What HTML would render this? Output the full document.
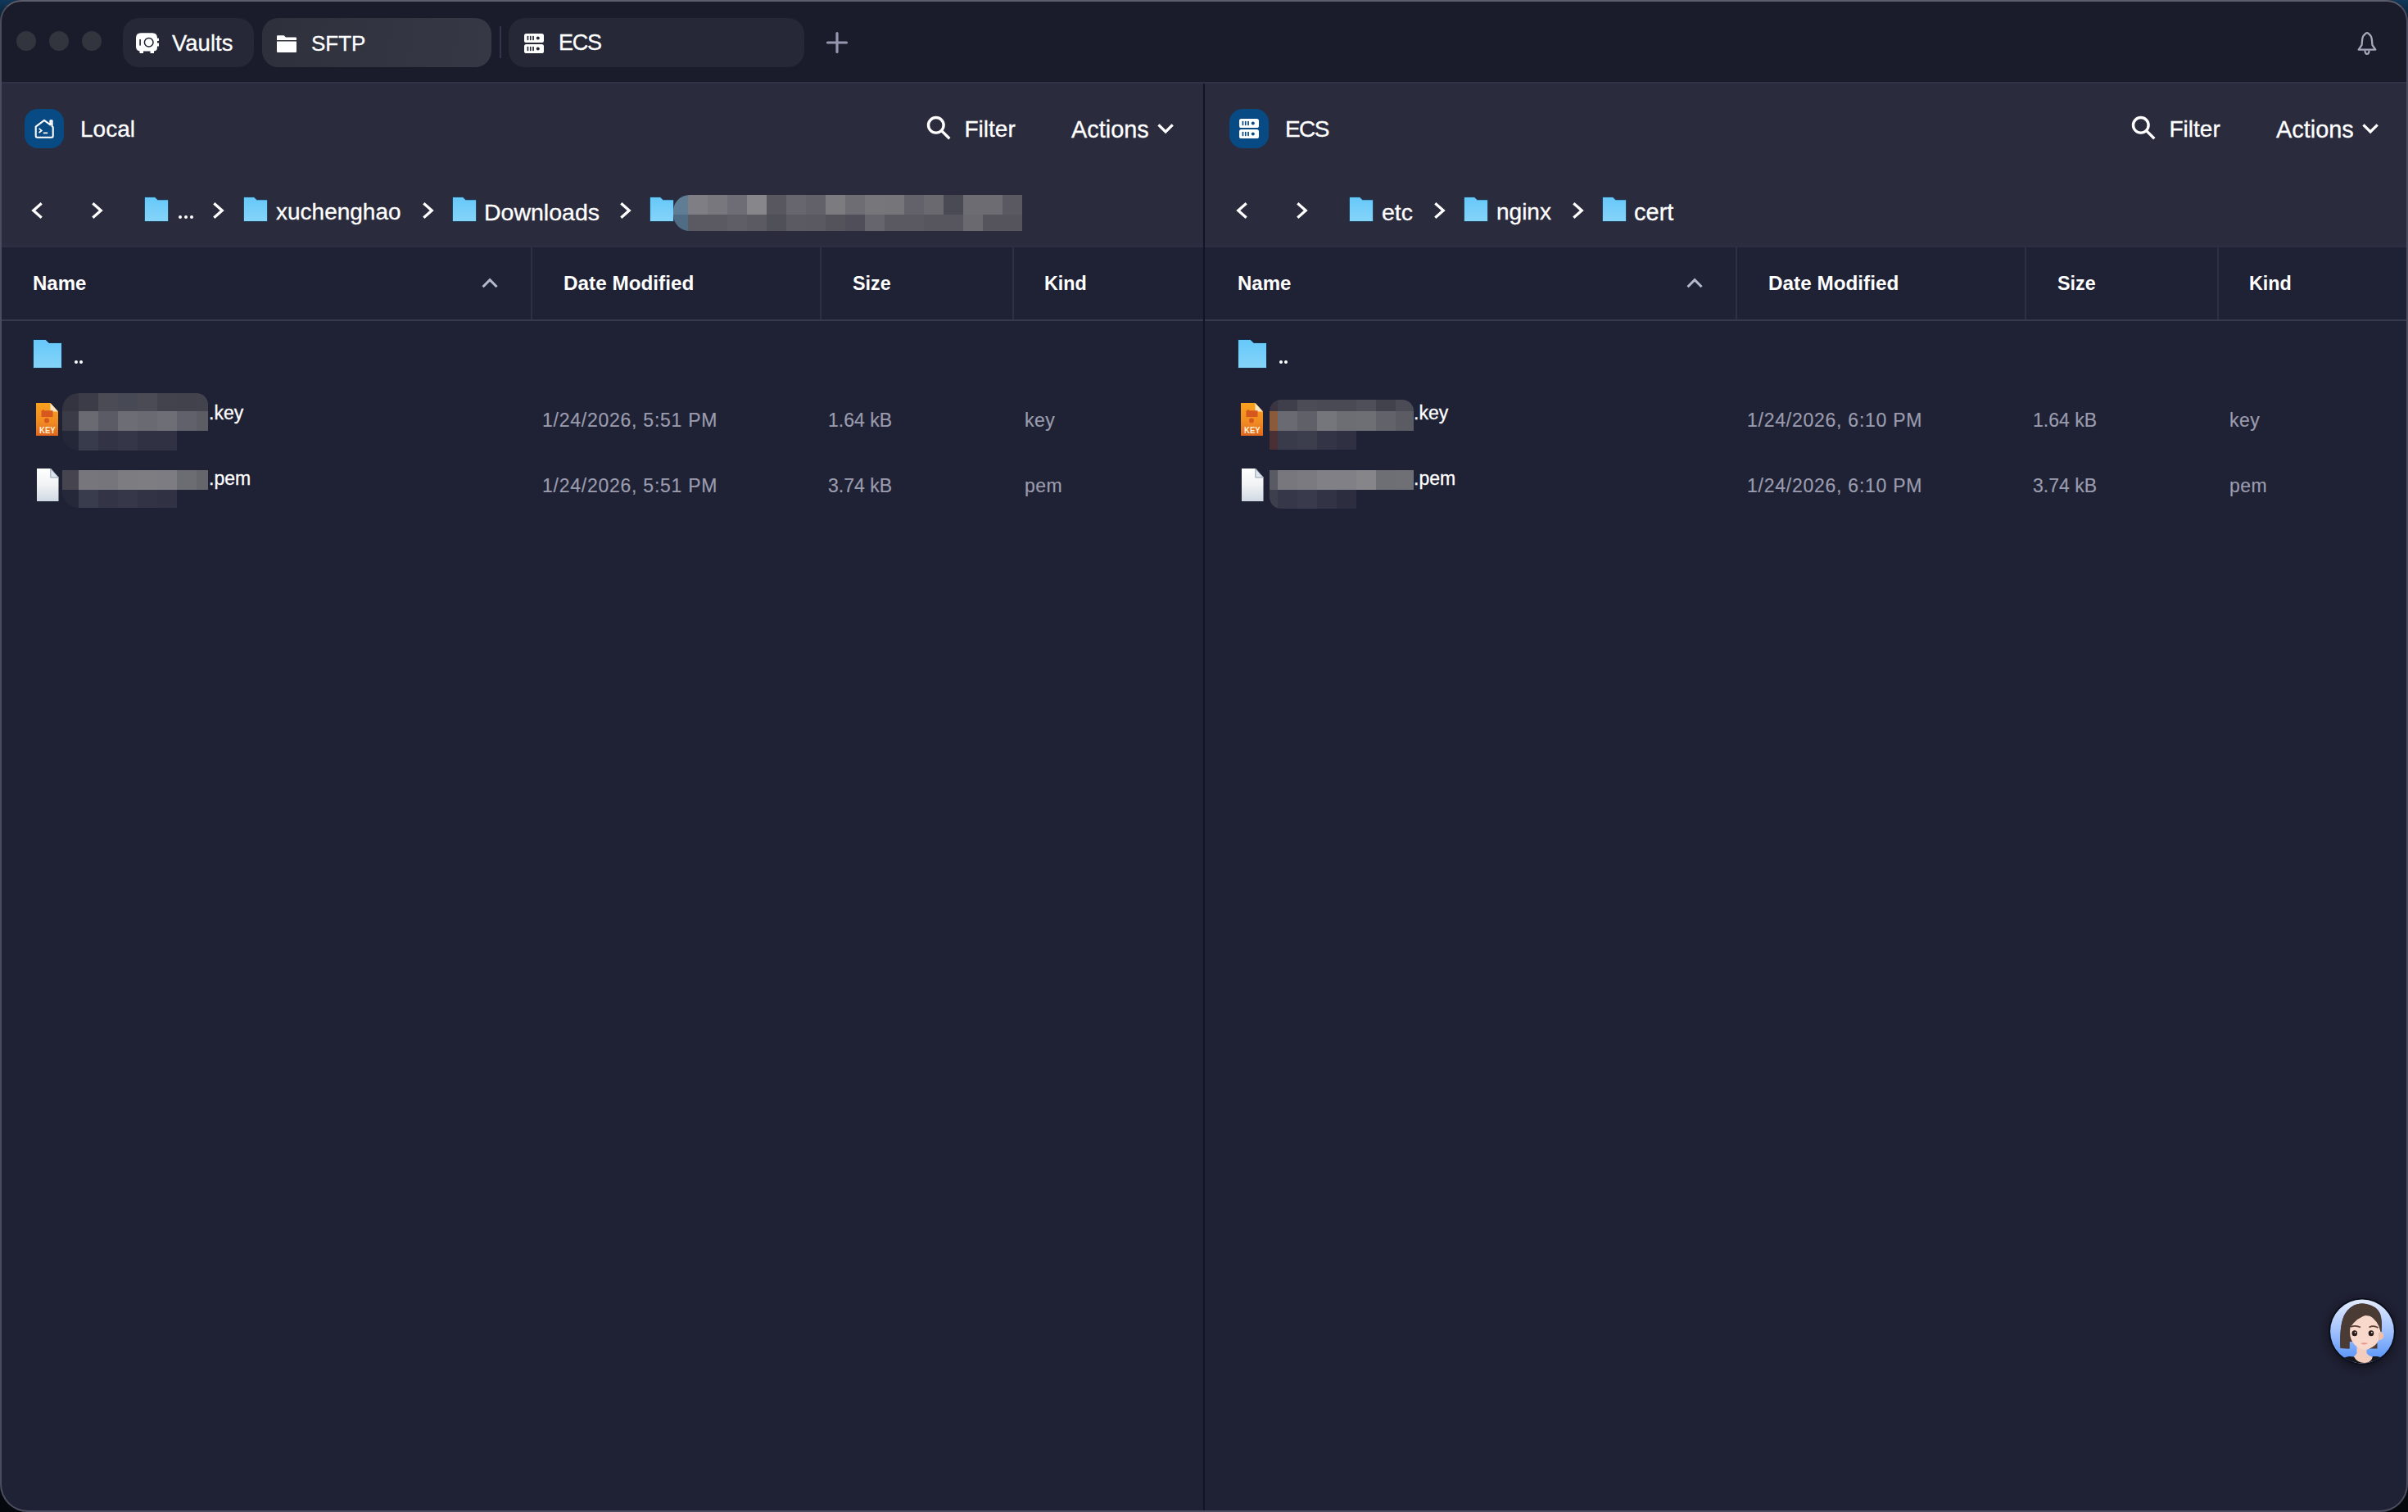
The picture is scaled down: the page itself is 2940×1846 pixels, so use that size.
<!DOCTYPE html>
<html><head><meta charset="utf-8">
<style>
*{margin:0;padding:0;box-sizing:border-box}
html,body{width:2940px;height:1846px;overflow:hidden;background:#040609}
body{background:linear-gradient(#10385a 0px,#0b2236 22px,#05080c 44px) !important}
body{position:relative;font-family:"Liberation Sans",sans-serif}
.win{position:absolute;left:0;top:0;width:2940px;height:1846px;border-radius:26px 26px 34px 34px;background:#1f2134;overflow:hidden}
.bd{position:absolute;left:0;top:0;width:2940px;height:1846px;border-radius:26px 26px 34px 34px;border:2px solid #4b4d5e;border-top-color:#5c5e6c;pointer-events:none;z-index:50}
.a{position:absolute}
.t{position:absolute;white-space:nowrap;line-height:1;color:#fff;-webkit-text-stroke:0.3px #fff}
.dt{-webkit-text-stroke:0.2px #9a9cae !important}
.tl{position:absolute;width:24px;height:24px;border-radius:50%;background:#33353e;top:38px}
.tab{position:absolute;top:22px;height:60px;border-radius:20px;background:#262837}
.cline{position:absolute;height:2px;background:#363a4d}
.csep{position:absolute;width:2px;background:#2d3043}
.ch{font-weight:700;font-size:24px;-webkit-text-stroke:0 !important}
.dt{font-size:23px;color:#9a9cae;letter-spacing:0.75px}
.fn{font-size:23px}
.bc{font-size:28px}
.hd{font-size:28px}
.pnl{position:absolute;top:0;width:1469px;height:1846px}
</style></head><body>
<svg width="0" height="0" style="position:absolute">
<defs>
<linearGradient id="fg" x1="0" y1="0" x2="0" y2="1"><stop offset="0" stop-color="#66c8f9"/><stop offset="1" stop-color="#85d4f9"/></linearGradient>
<linearGradient id="kg" x1="0" y1="0" x2="0" y2="1"><stop offset="0" stop-color="#f9a21e"/><stop offset="0.6" stop-color="#f08a22"/><stop offset="1" stop-color="#e0661f"/></linearGradient>
<linearGradient id="pg" x1="0" y1="0" x2="0" y2="1"><stop offset="0" stop-color="#ffffff"/><stop offset="0.5" stop-color="#f1f2f4"/><stop offset="1" stop-color="#cfd9e3"/></linearGradient>
<linearGradient id="ag" x1="0" y1="0" x2="0" y2="1"><stop offset="0" stop-color="#e3ecff"/><stop offset="0.45" stop-color="#a8c6ff"/><stop offset="1" stop-color="#4f8ff8"/></linearGradient>
</defs></svg>
<div class="win">
<div class="a" style="left:0;top:0;width:2940px;height:100px;background:#1b1c2b"></div>
<div class="tl" style="left:20px"></div><div class="tl" style="left:60px"></div><div class="tl" style="left:100px"></div>
<div class="tab" style="left:150px;width:160px"></div>
<div class="tab" style="left:320px;width:280px;background:linear-gradient(100deg,#2e303c,#373845)"></div>
<div class="a" style="left:610px;top:32px;width:2px;height:39px;background:#33354a"></div>
<div class="tab" style="left:621px;width:361px"></div>
<svg class="a" style="left:165px;top:39px" width="31" height="28" viewBox="0 0 31 28"><path d="M7,1.3 H21 Q27,1.3 27,7.3 V7.8 H29 V11.1 H27 V13.6 H29 V17.6 H27 V18.5 Q27,23.3 23,23.5 V26 H18.5 V23.5 H10 V26 H5.5 V23.4 Q1,22.8 1,18 V7.3 Q1,1.3 7,1.3 Z" fill="#fff"/><rect x="5.3" y="9" width="1.6" height="7.6" fill="#1f2233"/><circle cx="16.7" cy="12.8" r="5.3" fill="none" stroke="#1f2233" stroke-width="1.5"/></svg><svg class="a" style="left:338px;top:43px" width="24" height="22" viewBox="0 0 24 22"><path d="M1,0.3 H8.6 L11,2.6 H23 Q24,2.6 24,3.6 V6 H0 V1.3 Q0,0.3 1,0.3 Z" fill="#fff"/><path d="M0,7.5 H24 V20 Q24,21 23,21 H1 Q0,21 0,20 Z" fill="#fff"/></svg><svg class="a" style="left:640px;top:41px" width="24" height="24.0" viewBox="0 0 24 24"><rect x="0" y="0" width="24" height="11" rx="2.6" fill="#fff"/><rect x="3.6" y="2.8" width="1.7" height="5.4" rx="0.8" fill="#262837"/><rect x="6.9" y="2.8" width="1.7" height="5.4" rx="0.8" fill="#262837"/><rect x="10.2" y="2.8" width="1.7" height="5.4" rx="0.8" fill="#262837"/><circle cx="16.8" cy="5.5" r="2" fill="#262837"/><rect x="0" y="13" width="24" height="11" rx="2.6" fill="#fff"/><rect x="3.6" y="15.8" width="1.7" height="5.4" rx="0.8" fill="#262837"/><rect x="6.9" y="15.8" width="1.7" height="5.4" rx="0.8" fill="#262837"/><rect x="10.2" y="15.8" width="1.7" height="5.4" rx="0.8" fill="#262837"/><circle cx="16.8" cy="18.5" r="2" fill="#262837"/></svg><svg class="a" style="left:1008px;top:38px" width="28" height="28" viewBox="0 0 28 28"><path d="M14,2.5 V25.5 M2.5,14 H25.5" stroke="#9497ad" stroke-width="3.2" stroke-linecap="round"/></svg><svg class="a" style="left:2874px;top:36px" width="32" height="34" viewBox="0 0 32 34"><path d="M16,4.2 Q14.6,4.3 13.6,5.6 Q10.6,7.6 10.2,12 Q9.8,15.6 9.6,18.8 L5.7,24.6 H26.3 L22.4,18.8 Q22.2,15.6 21.8,12 Q21.4,7.6 18.4,5.6 Q17.4,4.3 16,4.2 Z" fill="none" stroke="#a6a9bb" stroke-width="2.3" stroke-linejoin="round"/><path d="M13.4,25.6 Q13.7,29.9 16,29.9 Q18.3,29.9 18.6,25.6" fill="none" stroke="#a6a9bb" stroke-width="2.2"/></svg><div class="t " style="left:210px;top:39px;font-size:27.5px">Vaults</div><div class="t " style="left:380px;top:40px;font-size:26px">SFTP</div><div class="t " style="left:682px;top:39px;font-size:27px;letter-spacing:-1.2px">ECS</div><div class="a" style="left:0;top:100px;width:2940px;height:2px;background:#303246"></div><div class="a" style="left:0;top:102px;width:1469px;height:200px;background:#2a2b3d"></div><div class="a" style="left:1471px;top:102px;width:1469px;height:200px;background:#2a2b3d"></div><div class="a" style="left:1469px;top:102px;width:2px;height:1744px;background:#121426"></div><div class="pnl" style="left:0px"><div class="a" style="left:30px;top:133px;width:48px;height:48px;border-radius:16px;background:#074a84"></div><svg class="a" style="left:30px;top:133px" width="48" height="48" viewBox="30 133 48 48"><path d="M43.7,166 V154.6 L54,146.9 L61.4,152.4 V147.4 H63.6 V154.2 L64.7,155.2 V166 Q64.7,167.7 63,167.7 H45.4 Q43.7,167.7 43.7,166 Z" fill="none" stroke="#fff" stroke-width="2.1" stroke-linejoin="round"/><path d="M47.6,156.8 L50.8,159.4 L47.6,162" fill="none" stroke="#fff" stroke-width="1.7"/><path d="M52.8,162.4 H58.2" stroke="#fff" stroke-width="1.7"/></svg><div class="t hd" style="left:98px;top:144px;">Local</div><svg class="a" style="left:1128px;top:138px" width="36" height="36" viewBox="1128 138 36 36"><circle cx="1142.8" cy="152.8" r="9.3" fill="none" stroke="#fff" stroke-width="3.4"/><path d="M1149.6,159.6 L1159.3,169.3" stroke="#fff" stroke-width="3.4"/></svg><div class="t hd" style="left:1177.5px;top:144px;">Filter</div><div class="t hd" style="left:1308px;top:144px;font-size:28.9px">Actions</div><svg class="a" style="left:1410px;top:148px" width="26" height="20" viewBox="1410 148 26 20"><path d="M1414.5,152.4 L1423.1,161 L1431.7,152.4" fill="none" stroke="#fff" stroke-width="3.3"/></svg><svg class="a" style="left:36px;top:244px" width="19" height="26" viewBox="-3 -3 19 26"><path d="M11.7,1.3 L1.8,10.0 L11.7,18.7" fill="none" stroke="#fff" stroke-width="3.3" stroke-linecap="butt" stroke-linejoin="miter"/></svg><svg class="a" style="left:109px;top:244px" width="19" height="26" viewBox="-3 -3 19 26"><path d="M1.3,1.3 L11.2,10.0 L1.3,18.7" fill="none" stroke="#fff" stroke-width="3.3" stroke-linecap="butt" stroke-linejoin="miter"/></svg><svg class="a" style="left:176px;top:240px" width="30" height="31" viewBox="0 0 36 36" preserveAspectRatio="none"><path d="M1,0.45 H14.8 Q15.6,0.45 16.2,0.95 L19.8,4.4 H34.8 Q35.55,4.4 35.55,5.4 V34.6 Q35.55,35.55 34.8,35.55 H1.2 Q0.45,35.55 0.45,34.6 V1.2 Q0.45,0.45 1,0.45 Z" fill="url(#fg)" stroke="#0d1f36" stroke-width="0.9"/></svg><div class="a" style="left:218px;top:263px;width:4px;height:4px;border-radius:2px;background:#fff"></div><div class="a" style="left:225px;top:263px;width:4px;height:4px;border-radius:2px;background:#fff"></div><div class="a" style="left:232px;top:263px;width:4px;height:4px;border-radius:2px;background:#fff"></div><svg class="a" style="left:257px;top:244px" width="19" height="26" viewBox="-3 -3 19 26"><path d="M1.3,1.3 L11.2,10.0 L1.3,18.7" fill="none" stroke="#fff" stroke-width="3.3" stroke-linecap="butt" stroke-linejoin="miter"/></svg><svg class="a" style="left:297px;top:240px" width="30" height="31" viewBox="0 0 36 36" preserveAspectRatio="none"><path d="M1,0.45 H14.8 Q15.6,0.45 16.2,0.95 L19.8,4.4 H34.8 Q35.55,4.4 35.55,5.4 V34.6 Q35.55,35.55 34.8,35.55 H1.2 Q0.45,35.55 0.45,34.6 V1.2 Q0.45,0.45 1,0.45 Z" fill="url(#fg)" stroke="#0d1f36" stroke-width="0.9"/></svg><div class="t bc" style="left:337px;top:245px;">xuchenghao</div><svg class="a" style="left:513px;top:244px" width="19" height="26" viewBox="-3 -3 19 26"><path d="M1.3,1.3 L11.2,10.0 L1.3,18.7" fill="none" stroke="#fff" stroke-width="3.3" stroke-linecap="butt" stroke-linejoin="miter"/></svg><svg class="a" style="left:552px;top:240px" width="30" height="31" viewBox="0 0 36 36" preserveAspectRatio="none"><path d="M1,0.45 H14.8 Q15.6,0.45 16.2,0.95 L19.8,4.4 H34.8 Q35.55,4.4 35.55,5.4 V34.6 Q35.55,35.55 34.8,35.55 H1.2 Q0.45,35.55 0.45,34.6 V1.2 Q0.45,0.45 1,0.45 Z" fill="url(#fg)" stroke="#0d1f36" stroke-width="0.9"/></svg><div class="t bc" style="left:591px;top:245px;font-size:28.5px">Downloads</div><svg class="a" style="left:754px;top:244px" width="19" height="26" viewBox="-3 -3 19 26"><path d="M1.3,1.3 L11.2,10.0 L1.3,18.7" fill="none" stroke="#fff" stroke-width="3.3" stroke-linecap="butt" stroke-linejoin="miter"/></svg><svg class="a" style="left:793px;top:240px" width="30" height="31" viewBox="0 0 36 36" preserveAspectRatio="none"><path d="M1,0.45 H14.8 Q15.6,0.45 16.2,0.95 L19.8,4.4 H34.8 Q35.55,4.4 35.55,5.4 V34.6 Q35.55,35.55 34.8,35.55 H1.2 Q0.45,35.55 0.45,34.6 V1.2 Q0.45,0.45 1,0.45 Z" fill="url(#fg)" stroke="#0d1f36" stroke-width="0.9"/></svg><div class="a" style="left:822px;top:238px;width:426px;height:44px;border-radius:20px 0 0 20px;overflow:hidden"><div class="a" style="left:0px;top:0px;width:18px;height:24px;background:#5f7e96"></div><div class="a" style="left:18px;top:0px;width:24px;height:24px;background:#7f7e85"></div><div class="a" style="left:42px;top:0px;width:24px;height:24px;background:#78777e"></div><div class="a" style="left:66px;top:0px;width:24px;height:24px;background:#6e6d75"></div><div class="a" style="left:90px;top:0px;width:24px;height:24px;background:#86868b"></div><div class="a" style="left:114px;top:0px;width:24px;height:24px;background:#58575f"></div><div class="a" style="left:138px;top:0px;width:24px;height:24px;background:#67666e"></div><div class="a" style="left:162px;top:0px;width:24px;height:24px;background:#62616a"></div><div class="a" style="left:186px;top:0px;width:24px;height:24px;background:#7b7b80"></div><div class="a" style="left:210px;top:0px;width:24px;height:24px;background:#6e6d74"></div><div class="a" style="left:234px;top:0px;width:24px;height:24px;background:#76767b"></div><div class="a" style="left:258px;top:0px;width:24px;height:24px;background:#75757a"></div><div class="a" style="left:282px;top:0px;width:24px;height:24px;background:#63626a"></div><div class="a" style="left:306px;top:0px;width:24px;height:24px;background:#6a6970"></div><div class="a" style="left:330px;top:0px;width:24px;height:24px;background:#4a4a54"></div><div class="a" style="left:354px;top:0px;width:24px;height:24px;background:#6d6c73"></div><div class="a" style="left:378px;top:0px;width:24px;height:24px;background:#6d6c73"></div><div class="a" style="left:402px;top:0px;width:24px;height:24px;background:#5a5962"></div><div class="a" style="left:0px;top:24px;width:18px;height:20px;background:#4f6c84"></div><div class="a" style="left:18px;top:24px;width:24px;height:20px;background:#5b5a63"></div><div class="a" style="left:42px;top:24px;width:24px;height:20px;background:#5b5a63"></div><div class="a" style="left:66px;top:24px;width:24px;height:20px;background:#5f5e66"></div><div class="a" style="left:90px;top:24px;width:24px;height:20px;background:#5b5a62"></div><div class="a" style="left:114px;top:24px;width:24px;height:20px;background:#505059"></div><div class="a" style="left:138px;top:24px;width:24px;height:20px;background:#5b5a62"></div><div class="a" style="left:162px;top:24px;width:24px;height:20px;background:#5a5962"></div><div class="a" style="left:186px;top:24px;width:24px;height:20px;background:#54535c"></div><div class="a" style="left:210px;top:24px;width:24px;height:20px;background:#504f59"></div><div class="a" style="left:234px;top:24px;width:24px;height:20px;background:#66656d"></div><div class="a" style="left:258px;top:24px;width:24px;height:20px;background:#5a5962"></div><div class="a" style="left:282px;top:24px;width:24px;height:20px;background:#5a5962"></div><div class="a" style="left:306px;top:24px;width:24px;height:20px;background:#57565f"></div><div class="a" style="left:330px;top:24px;width:24px;height:20px;background:#57565f"></div><div class="a" style="left:354px;top:24px;width:24px;height:20px;background:#6a6970"></div><div class="a" style="left:378px;top:24px;width:24px;height:20px;background:#55545d"></div><div class="a" style="left:402px;top:24px;width:24px;height:20px;background:#55545d"></div></div><div class="a" style="left:0;top:299px;width:1469px;height:3px;background:#2c2d40"></div><div class="a" style="left:0;top:302px;width:1469px;height:88px;background:#1f2134"></div><div class="cline" style="left:0;top:390px;width:1469px"></div><div class="csep" style="left:648px;top:302px;height:88px"></div><div class="csep" style="left:1001px;top:302px;height:88px"></div><div class="csep" style="left:1236px;top:302px;height:88px"></div><div class="t ch" style="left:40px;top:334px;">Name</div><div class="t ch" style="left:688px;top:334px;font-size:24.3px">Date Modified</div><div class="t ch" style="left:1041px;top:335px;font-size:23.3px">Size</div><div class="t ch" style="left:1275px;top:335px;font-size:23.3px">Kind</div><svg class="a" style="left:585px;top:336px" width="26" height="18" viewBox="585 336 26 18"><path d="M589.6,350.3 L598.1,341.6 L606.6,350.3" fill="none" stroke="#b3bbca" stroke-width="3"/></svg><svg class="a" style="left:40px;top:414px" width="36" height="36" viewBox="0 0 36 36" preserveAspectRatio="none"><path d="M1,0.45 H14.8 Q15.6,0.45 16.2,0.95 L19.8,4.4 H34.8 Q35.55,4.4 35.55,5.4 V34.6 Q35.55,35.55 34.8,35.55 H1.2 Q0.45,35.55 0.45,34.6 V1.2 Q0.45,0.45 1,0.45 Z" fill="url(#fg)" stroke="#0d1f36" stroke-width="0.9"/></svg><div class="a" style="left:91.2px;top:439.8px;width:3.9px;height:3.9px;border-radius:50%;background:#fff"></div><div class="a" style="left:97.2px;top:439.8px;width:3.9px;height:3.9px;border-radius:50%;background:#fff"></div><svg class="a" style="left:44px;top:492px" width="27" height="40" viewBox="0 0 27 40"><path d="M0,0 H17.5 L27,10.5 V40 H0 Z" fill="url(#kg)"/><path d="M17.5,0 L27,10.5 H17.5 Z" fill="#fbe6c4"/><path d="M6.5,9.3 H8 V8 H9.5 V9.3 H20.5 V17 H6.5 Z" fill="#d6581f"/><circle cx="13" cy="21.5" r="3" fill="#d6581f"/><text x="4" y="36.6" font-family="Liberation Sans" font-weight="700" font-size="11.4" fill="#fff3da" textLength="19.6" lengthAdjust="spacingAndGlyphs">KEY</text></svg><svg class="a" style="left:45px;top:572px" width="27" height="40" viewBox="0 0 27 40"><path d="M0,0 H16.8 L26.5,11 V40 H0 Z" fill="url(#pg)"/><path d="M16.8,0 L26.5,11 H16.8 Z" fill="#d9e6f2" stroke="#9aa0a8" stroke-width="1"/></svg><div class="a" style="left:76px;top:480px;width:178px;height:70px;border-radius:20px 14px 0 20px;overflow:hidden"><div class="a" style="left:0px;top:0px;width:20px;height:22px;background:#33343f"></div><div class="a" style="left:20px;top:0px;width:24px;height:22px;background:#3b3c48"></div><div class="a" style="left:44px;top:0px;width:24px;height:22px;background:#4a4b55"></div><div class="a" style="left:68px;top:0px;width:24px;height:22px;background:#474a54"></div><div class="a" style="left:92px;top:0px;width:24px;height:22px;background:#4a4b55"></div><div class="a" style="left:116px;top:0px;width:24px;height:22px;background:#42434d"></div><div class="a" style="left:140px;top:0px;width:24px;height:22px;background:#41424c"></div><div class="a" style="left:164px;top:0px;width:14px;height:22px;background:#42434d"></div><div class="a" style="left:0px;top:22px;width:20px;height:24px;background:#3a3b46"></div><div class="a" style="left:20px;top:22px;width:24px;height:24px;background:#6a6b72"></div><div class="a" style="left:44px;top:22px;width:24px;height:24px;background:#5a5b64"></div><div class="a" style="left:68px;top:22px;width:24px;height:24px;background:#6d6d75"></div><div class="a" style="left:92px;top:22px;width:24px;height:24px;background:#6a6b72"></div><div class="a" style="left:116px;top:22px;width:24px;height:24px;background:#6e6e76"></div><div class="a" style="left:140px;top:22px;width:24px;height:24px;background:#60616a"></div><div class="a" style="left:164px;top:22px;width:14px;height:24px;background:#5b5c64"></div><div class="a" style="left:0px;top:46px;width:20px;height:24px;background:#242737"></div><div class="a" style="left:20px;top:46px;width:24px;height:24px;background:#383b4c"></div><div class="a" style="left:44px;top:46px;width:24px;height:24px;background:#323446"></div><div class="a" style="left:68px;top:46px;width:24px;height:24px;background:#353749"></div><div class="a" style="left:92px;top:46px;width:24px;height:24px;background:#303244"></div><div class="a" style="left:116px;top:46px;width:24px;height:24px;background:#303244"></div></div><div class="a" style="left:76px;top:574px;width:178px;height:46px;border-radius:0 0 0 20px;overflow:hidden"><div class="a" style="left:0px;top:0px;width:20px;height:24px;background:#45444f"></div><div class="a" style="left:20px;top:0px;width:24px;height:24px;background:#77767c"></div><div class="a" style="left:44px;top:0px;width:24px;height:24px;background:#76757b"></div><div class="a" style="left:68px;top:0px;width:24px;height:24px;background:#7c7c81"></div><div class="a" style="left:92px;top:0px;width:24px;height:24px;background:#7d7d82"></div><div class="a" style="left:116px;top:0px;width:24px;height:24px;background:#7c7c82"></div><div class="a" style="left:140px;top:0px;width:24px;height:24px;background:#6c6c73"></div><div class="a" style="left:164px;top:0px;width:14px;height:24px;background:#65656c"></div><div class="a" style="left:0px;top:24px;width:20px;height:22px;background:#252838"></div><div class="a" style="left:20px;top:24px;width:24px;height:22px;background:#393c4d"></div><div class="a" style="left:44px;top:24px;width:24px;height:22px;background:#333547"></div><div class="a" style="left:68px;top:24px;width:24px;height:22px;background:#363849"></div><div class="a" style="left:92px;top:24px;width:24px;height:22px;background:#323446"></div><div class="a" style="left:116px;top:24px;width:24px;height:22px;background:#303244"></div></div><div class="t fn" style="left:255px;top:493px;">.key</div><div class="t fn" style="left:255px;top:573px;">.pem</div><div class="t dt" style="left:662px;top:502px;">1/24/2026, 5:51 PM</div><div class="t dt" style="left:1011px;top:502px;letter-spacing:0">1.64 kB</div><div class="t dt" style="left:1251px;top:502px;letter-spacing:0.5px">key</div><div class="t dt" style="left:662px;top:582px;">1/24/2026, 5:51 PM</div><div class="t dt" style="left:1011px;top:582px;letter-spacing:0">3.74 kB</div><div class="t dt" style="left:1251px;top:582px;letter-spacing:0.5px">pem</div></div><div class="pnl" style="left:1471px"><div class="a" style="left:30px;top:133px;width:48px;height:48px;border-radius:16px;background:#074a84"></div><svg class="a" style="left:42px;top:145px" width="24" height="24.0" viewBox="0 0 24 24"><rect x="0" y="0" width="24" height="11" rx="2.6" fill="#fff"/><rect x="3.6" y="2.8" width="1.7" height="5.4" rx="0.8" fill="#074a84"/><rect x="6.9" y="2.8" width="1.7" height="5.4" rx="0.8" fill="#074a84"/><rect x="10.2" y="2.8" width="1.7" height="5.4" rx="0.8" fill="#074a84"/><circle cx="16.8" cy="5.5" r="2" fill="#074a84"/><rect x="0" y="13" width="24" height="11" rx="2.6" fill="#fff"/><rect x="3.6" y="15.8" width="1.7" height="5.4" rx="0.8" fill="#074a84"/><rect x="6.9" y="15.8" width="1.7" height="5.4" rx="0.8" fill="#074a84"/><rect x="10.2" y="15.8" width="1.7" height="5.4" rx="0.8" fill="#074a84"/><circle cx="16.8" cy="18.5" r="2" fill="#074a84"/></svg><div class="t hd" style="left:98px;top:144px;letter-spacing:-1.6px;font-size:28px">ECS</div><svg class="a" style="left:1128px;top:138px" width="36" height="36" viewBox="1128 138 36 36"><circle cx="1142.8" cy="152.8" r="9.3" fill="none" stroke="#fff" stroke-width="3.4"/><path d="M1149.6,159.6 L1159.3,169.3" stroke="#fff" stroke-width="3.4"/></svg><div class="t hd" style="left:1177.5px;top:144px;">Filter</div><div class="t hd" style="left:1308px;top:144px;font-size:28.9px">Actions</div><svg class="a" style="left:1410px;top:148px" width="26" height="20" viewBox="1410 148 26 20"><path d="M1414.5,152.4 L1423.1,161 L1431.7,152.4" fill="none" stroke="#fff" stroke-width="3.3"/></svg><svg class="a" style="left:36px;top:244px" width="19" height="26" viewBox="-3 -3 19 26"><path d="M11.7,1.3 L1.8,10.0 L11.7,18.7" fill="none" stroke="#fff" stroke-width="3.3" stroke-linecap="butt" stroke-linejoin="miter"/></svg><svg class="a" style="left:109px;top:244px" width="19" height="26" viewBox="-3 -3 19 26"><path d="M1.3,1.3 L11.2,10.0 L1.3,18.7" fill="none" stroke="#fff" stroke-width="3.3" stroke-linecap="butt" stroke-linejoin="miter"/></svg><svg class="a" style="left:176px;top:240px" width="30" height="31" viewBox="0 0 36 36" preserveAspectRatio="none"><path d="M1,0.45 H14.8 Q15.6,0.45 16.2,0.95 L19.8,4.4 H34.8 Q35.55,4.4 35.55,5.4 V34.6 Q35.55,35.55 34.8,35.55 H1.2 Q0.45,35.55 0.45,34.6 V1.2 Q0.45,0.45 1,0.45 Z" fill="url(#fg)" stroke="#0d1f36" stroke-width="0.9"/></svg><div class="t bc" style="left:216px;top:245px;font-size:28.5px">etc</div><svg class="a" style="left:277px;top:244px" width="19" height="26" viewBox="-3 -3 19 26"><path d="M1.3,1.3 L11.2,10.0 L1.3,18.7" fill="none" stroke="#fff" stroke-width="3.3" stroke-linecap="butt" stroke-linejoin="miter"/></svg><svg class="a" style="left:316px;top:240px" width="30" height="31" viewBox="0 0 36 36" preserveAspectRatio="none"><path d="M1,0.45 H14.8 Q15.6,0.45 16.2,0.95 L19.8,4.4 H34.8 Q35.55,4.4 35.55,5.4 V34.6 Q35.55,35.55 34.8,35.55 H1.2 Q0.45,35.55 0.45,34.6 V1.2 Q0.45,0.45 1,0.45 Z" fill="url(#fg)" stroke="#0d1f36" stroke-width="0.9"/></svg><div class="t bc" style="left:356px;top:245px;">nginx</div><svg class="a" style="left:446px;top:244px" width="19" height="26" viewBox="-3 -3 19 26"><path d="M1.3,1.3 L11.2,10.0 L1.3,18.7" fill="none" stroke="#fff" stroke-width="3.3" stroke-linecap="butt" stroke-linejoin="miter"/></svg><svg class="a" style="left:485px;top:240px" width="30" height="31" viewBox="0 0 36 36" preserveAspectRatio="none"><path d="M1,0.45 H14.8 Q15.6,0.45 16.2,0.95 L19.8,4.4 H34.8 Q35.55,4.4 35.55,5.4 V34.6 Q35.55,35.55 34.8,35.55 H1.2 Q0.45,35.55 0.45,34.6 V1.2 Q0.45,0.45 1,0.45 Z" fill="url(#fg)" stroke="#0d1f36" stroke-width="0.9"/></svg><div class="t bc" style="left:524px;top:245px;font-size:29px">cert</div><div class="a" style="left:0;top:299px;width:1469px;height:3px;background:#2c2d40"></div><div class="a" style="left:0;top:302px;width:1469px;height:88px;background:#1f2134"></div><div class="cline" style="left:0;top:390px;width:1469px"></div><div class="csep" style="left:648px;top:302px;height:88px"></div><div class="csep" style="left:1001px;top:302px;height:88px"></div><div class="csep" style="left:1236px;top:302px;height:88px"></div><div class="t ch" style="left:40px;top:334px;">Name</div><div class="t ch" style="left:688px;top:334px;font-size:24.3px">Date Modified</div><div class="t ch" style="left:1041px;top:335px;font-size:23.3px">Size</div><div class="t ch" style="left:1275px;top:335px;font-size:23.3px">Kind</div><svg class="a" style="left:585px;top:336px" width="26" height="18" viewBox="585 336 26 18"><path d="M589.6,350.3 L598.1,341.6 L606.6,350.3" fill="none" stroke="#b3bbca" stroke-width="3"/></svg><svg class="a" style="left:40px;top:414px" width="36" height="36" viewBox="0 0 36 36" preserveAspectRatio="none"><path d="M1,0.45 H14.8 Q15.6,0.45 16.2,0.95 L19.8,4.4 H34.8 Q35.55,4.4 35.55,5.4 V34.6 Q35.55,35.55 34.8,35.55 H1.2 Q0.45,35.55 0.45,34.6 V1.2 Q0.45,0.45 1,0.45 Z" fill="url(#fg)" stroke="#0d1f36" stroke-width="0.9"/></svg><div class="a" style="left:91.2px;top:439.8px;width:3.9px;height:3.9px;border-radius:50%;background:#fff"></div><div class="a" style="left:97.2px;top:439.8px;width:3.9px;height:3.9px;border-radius:50%;background:#fff"></div><svg class="a" style="left:44px;top:492px" width="27" height="40" viewBox="0 0 27 40"><path d="M0,0 H17.5 L27,10.5 V40 H0 Z" fill="url(#kg)"/><path d="M17.5,0 L27,10.5 H17.5 Z" fill="#fbe6c4"/><path d="M6.5,9.3 H8 V8 H9.5 V9.3 H20.5 V17 H6.5 Z" fill="#d6581f"/><circle cx="13" cy="21.5" r="3" fill="#d6581f"/><text x="4" y="36.6" font-family="Liberation Sans" font-weight="700" font-size="11.4" fill="#fff3da" textLength="19.6" lengthAdjust="spacingAndGlyphs">KEY</text></svg><svg class="a" style="left:45px;top:572px" width="27" height="40" viewBox="0 0 27 40"><path d="M0,0 H16.8 L26.5,11 V40 H0 Z" fill="url(#pg)"/><path d="M16.8,0 L26.5,11 H16.8 Z" fill="#d9e6f2" stroke="#9aa0a8" stroke-width="1"/></svg><div class="a" style="left:79px;top:488px;width:176px;height:61px;border-radius:14px 14px 0 0;overflow:hidden"><div class="a" style="left:0px;top:0px;width:10px;height:14px;background:#3a3540"></div><div class="a" style="left:10px;top:0px;width:24px;height:14px;background:#3e3f4a"></div><div class="a" style="left:34px;top:0px;width:24px;height:14px;background:#4b4c56"></div><div class="a" style="left:58px;top:0px;width:24px;height:14px;background:#494a54"></div><div class="a" style="left:82px;top:0px;width:24px;height:14px;background:#494a54"></div><div class="a" style="left:106px;top:0px;width:24px;height:14px;background:#4e4f59"></div><div class="a" style="left:130px;top:0px;width:24px;height:14px;background:#41424c"></div><div class="a" style="left:154px;top:0px;width:22px;height:14px;background:#4a4b55"></div><div class="a" style="left:0px;top:14px;width:10px;height:24px;background:#8a5a3a"></div><div class="a" style="left:10px;top:14px;width:24px;height:24px;background:#6a6a72"></div><div class="a" style="left:34px;top:14px;width:24px;height:24px;background:#5f6068"></div><div class="a" style="left:58px;top:14px;width:24px;height:24px;background:#75757c"></div><div class="a" style="left:82px;top:14px;width:24px;height:24px;background:#6d6d74"></div><div class="a" style="left:106px;top:14px;width:24px;height:24px;background:#6e6e75"></div><div class="a" style="left:130px;top:14px;width:24px;height:24px;background:#62626a"></div><div class="a" style="left:154px;top:14px;width:22px;height:24px;background:#5b5b63"></div><div class="a" style="left:0px;top:38px;width:10px;height:23px;background:#4a2f35"></div><div class="a" style="left:10px;top:38px;width:24px;height:23px;background:#393b4b"></div><div class="a" style="left:34px;top:38px;width:24px;height:23px;background:#3c3e4e"></div><div class="a" style="left:58px;top:38px;width:24px;height:23px;background:#333547"></div><div class="a" style="left:82px;top:38px;width:24px;height:23px;background:#2f3143"></div></div><div class="a" style="left:79px;top:574px;width:176px;height:47px;border-radius:0 0 0 14px;overflow:hidden"><div class="a" style="left:0px;top:0px;width:10px;height:24px;background:#5a5a64"></div><div class="a" style="left:10px;top:0px;width:24px;height:24px;background:#77777d"></div><div class="a" style="left:34px;top:0px;width:24px;height:24px;background:#7a7a80"></div><div class="a" style="left:58px;top:0px;width:24px;height:24px;background:#808086"></div><div class="a" style="left:82px;top:0px;width:24px;height:24px;background:#808086"></div><div class="a" style="left:106px;top:0px;width:24px;height:24px;background:#85858a"></div><div class="a" style="left:130px;top:0px;width:24px;height:24px;background:#6e6e75"></div><div class="a" style="left:154px;top:0px;width:22px;height:24px;background:#6f6f76"></div><div class="a" style="left:0px;top:24px;width:10px;height:23px;background:#3e3f4c"></div><div class="a" style="left:10px;top:24px;width:24px;height:23px;background:#363849"></div><div class="a" style="left:34px;top:24px;width:24px;height:23px;background:#393b4c"></div><div class="a" style="left:58px;top:24px;width:24px;height:23px;background:#323446"></div><div class="a" style="left:82px;top:24px;width:24px;height:23px;background:#2c2e40"></div></div><div class="t fn" style="left:255px;top:493px;">.key</div><div class="t fn" style="left:255px;top:573px;">.pem</div><div class="t dt" style="left:662px;top:502px;">1/24/2026, 6:10 PM</div><div class="t dt" style="left:1011px;top:502px;letter-spacing:0">1.64 kB</div><div class="t dt" style="left:1251px;top:502px;letter-spacing:0.5px">key</div><div class="t dt" style="left:662px;top:582px;">1/24/2026, 6:10 PM</div><div class="t dt" style="left:1011px;top:582px;letter-spacing:0">3.74 kB</div><div class="t dt" style="left:1251px;top:582px;letter-spacing:0.5px">pem</div></div><svg class="a" style="left:2840px;top:1582px;filter:drop-shadow(0 3px 6px rgba(0,0,0,0.45))" width="88" height="88" viewBox="0 0 88 88"><circle cx="44" cy="43.5" r="40.8" fill="#0a0d1b"/><circle cx="44" cy="43.5" r="38.9" fill="url(#ag)"/><clipPath id="avc"><circle cx="44" cy="43.5" r="38.9"/></clipPath><g clip-path="url(#avc)"><path d="M17.5,64 Q16,38 22,24 Q30,9.5 44,9.5 Q60,10 66,22 Q69,32 67.5,44 L62.5,52 V64.5 H51 V56 H28.5 V64.5 Z" fill="#4a3b34"/><path d="M37.5,58 H49.5 V70 Q52,74 58,75 V90 H33 V75 Q36,73 37.5,70 Z" fill="#f2cdbe"/><path d="M29,44 Q29,30 40,25 Q50,22 60,27 Q67,33 67,44 Q66,55 59,61 Q52,66 47,66 Q40,65 35,60 Q29,54 29,44 Z" fill="#f7d8ca"/><path d="M64,45 Q70,43 70.5,49 Q70,54 64,54 Z" fill="#eec0ac"/><path d="M17.5,64 Q16,38 22,24 Q30,9.5 44,9.5 Q50,9.5 53,12 L51,23 Q38,26 29,39 L28.5,64.5 Z" fill="#4a3b34"/><path d="M53,12 Q62,13 66,22 Q69,32 67.5,44 L66.5,44 Q64,30 51,23 Z" fill="#4a3b34"/><path d="M8,90 V80 Q18,76 28,74 L34,74.5 Q38,82 47,82 Q55,82 57,74 L62,74 Q74,76 82,80 V90 Z" fill="#15161b"/><path d="M30,38 Q36,35.5 42,38.5" stroke="#5a4036" stroke-width="1.6" fill="none"/><path d="M52.5,38.5 Q58,35.5 63.5,39" stroke="#5a4036" stroke-width="1.6" fill="none"/><ellipse cx="34.8" cy="45.8" rx="3.3" ry="3.5" fill="#2a1a18"/><ellipse cx="55" cy="45.8" rx="3.3" ry="3.5" fill="#2a1a18"/><circle cx="35.6" cy="44.8" r="0.9" fill="#fff"/><circle cx="55.8" cy="44.8" r="0.9" fill="#fff"/><path d="M42,58 Q46.5,56.6 51,58 Q46.5,61 42,58 Z" fill="#e8998a"/></g></svg></div><div class="bd"></div></body></html>
